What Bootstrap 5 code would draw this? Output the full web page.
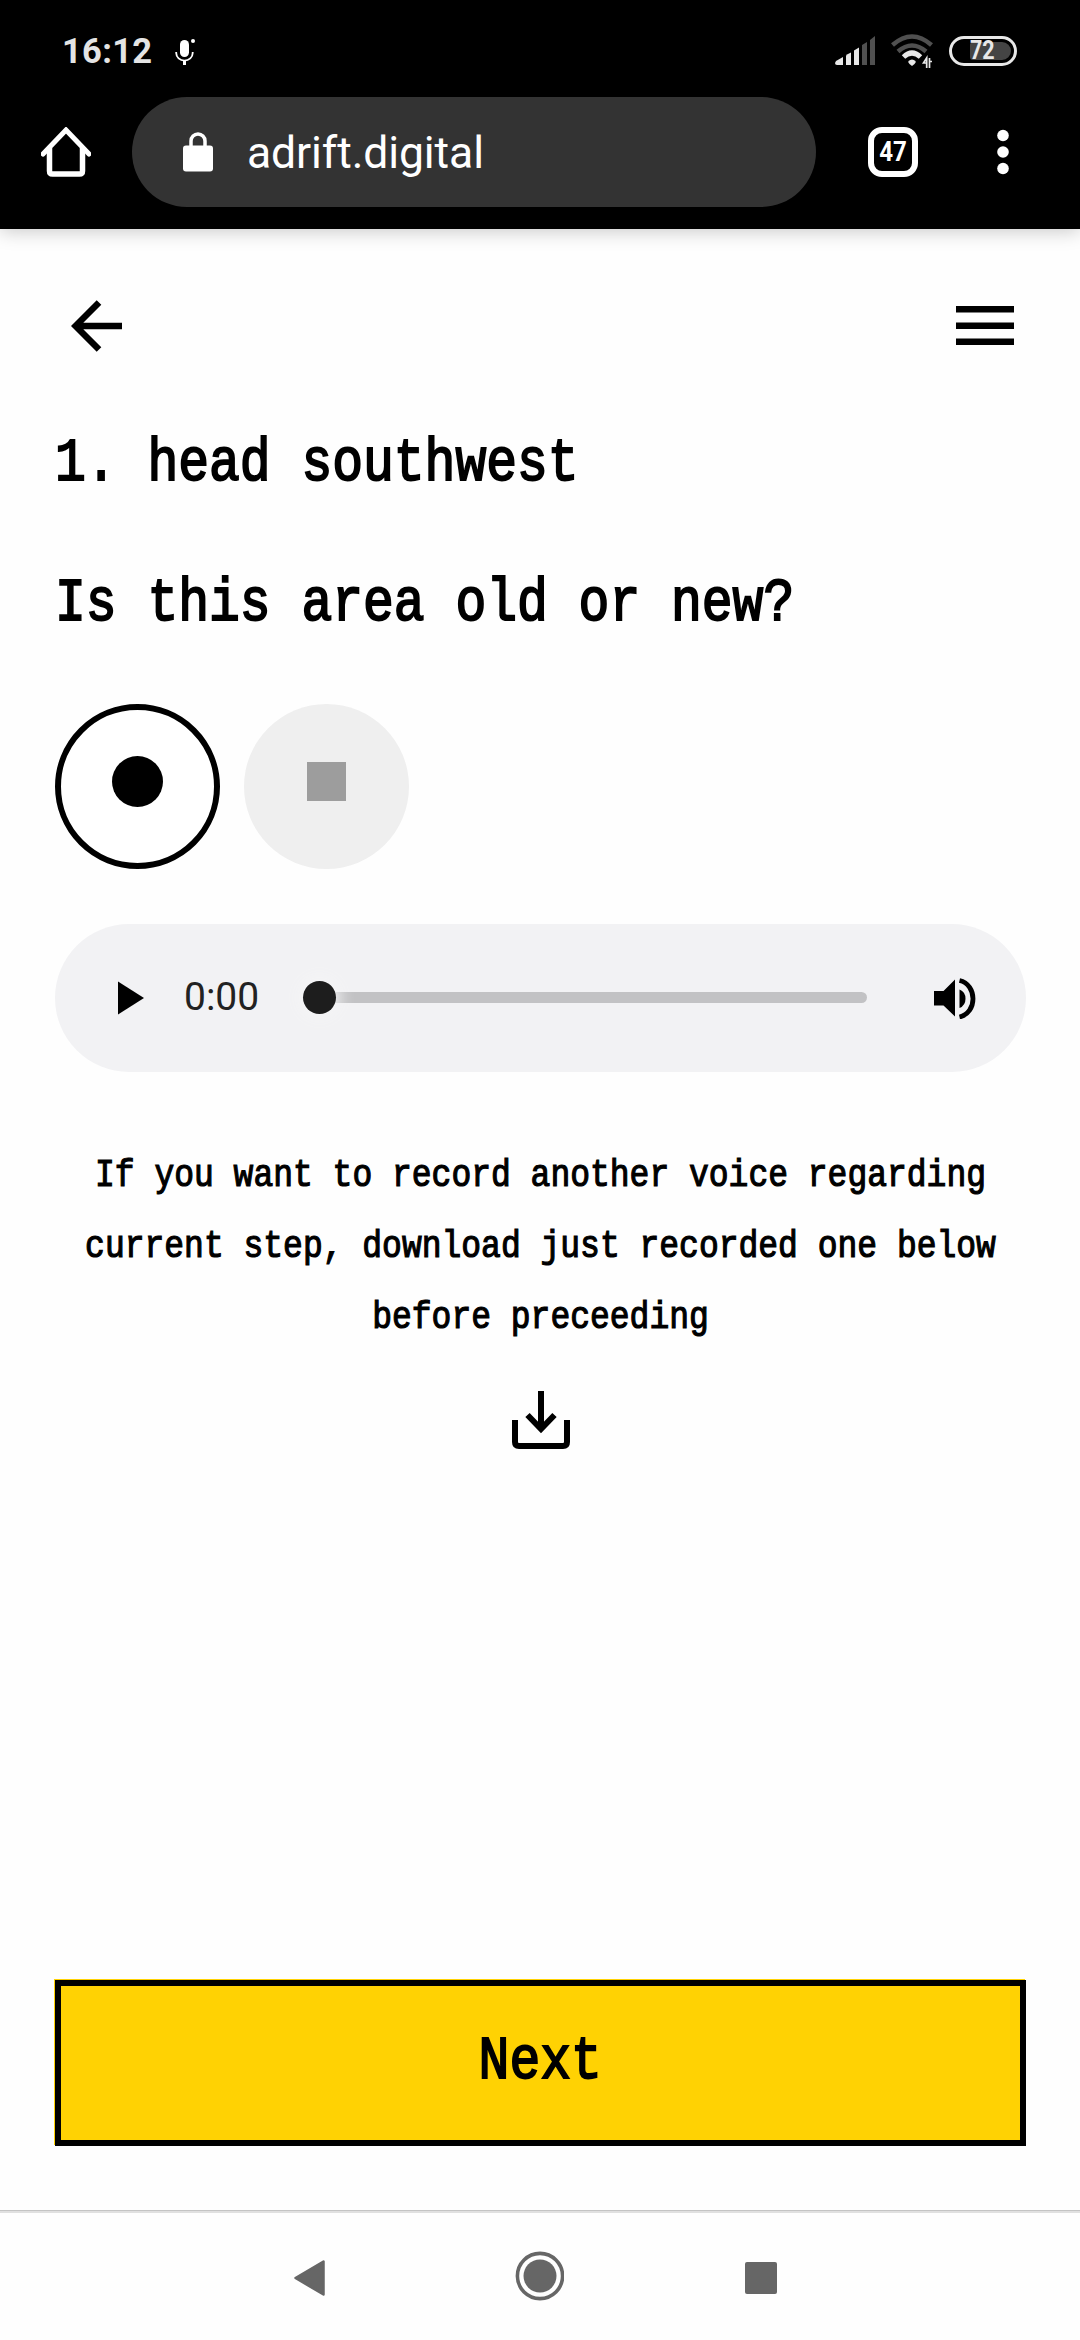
<!DOCTYPE html>
<html lang="en">
<head>
<meta charset="utf-8">
<meta name="viewport" content="width=device-width, initial-scale=1">
<title>adrift.digital</title>
<link href="https://cdn.jsdelivr.net/npm/bootstrap@5.3.0/dist/css/bootstrap.min.css" rel="stylesheet">
<style>
  body { width: 1080px; height: 2340px; overflow: hidden; background: #fefefe; color: #000; font-family: Roboto, sans-serif; }
  svg { display: block; flex: none; }
  .browser-top { height: 229px; background: #000; box-shadow: 0 2px 18px rgba(0,0,0,.22); }
  .status-row { height: 97px; padding: 5px 63px 0 62px; }
  .clock { font-size: 34.5px; font-weight: 700; color: #e4e4e4; line-height: 1; width: 113px; letter-spacing: .3px; }
  .url-row { height: 110px; padding: 0 71px 0 41px; }
  .url-pill { width: 684px; height: 110px; background: #333; margin-left: 41px; padding-left: 51px; border-radius: 55px; color: #fff; font-size: 44.5px; line-height: 1; }
  .url-text { padding: 3px 0 0 34px; letter-spacing: -.1px; }
  .tab-count { width: 50px; height: 50px; border: 6px solid #fff; border-radius: 14px; color: #fff; font-size: 28px; font-weight: 700; line-height: 1; margin-left: 52px; }
  .tab-count span { transform: scaleX(.86); }
  .battery { width: 68px; height: 30px; border: 3px solid #e8e8e8; border-radius: 15px; padding: 3px; color: #e8e8e8; margin-left: 16px; }
  .battery-level { width: 41px; height: 18px; background: #444; border-radius: 3px 9px 9px 3px; font-size: 25px; font-weight: 700; line-height: 18px; }
  .battery-level span { transform: scaleX(.86); transform-origin: left; }
  .page-area { height: 1981px; padding: 0 54px 0 55px; }
  .page-nav { height: 194px; padding: 0 12px 0 16px; }
  .mono { font-family: "Liberation Mono", monospace; font-weight: 400; color: #000; -webkit-text-stroke: 2px #000; white-space: pre; }
  .step-title { font-size: 61px; line-height: 140px; height: 140px; transform: scaleX(.8414); transform-origin: left; margin: 0; }
  .titles { margin-top: -29px; height: 310px; }
  .round-btn { width: 165px; height: 165px; border-radius: 50%; padding: 0 0 10px; }
  .rec-btn { border: 6px solid #000; background: #fff; }
  .stop-btn { background: #efefef; }
  .player { height: 148px; border-radius: 74px; background: #f2f2f4; margin-top: 55px; padding: 0 50px 0 63px; }
  .time { font-size: 39px; color: #222; line-height: 1; margin-left: 40px; width: 119px; margin-top: -2px; }
  .track { width: 564px; height: 11px; border-radius: 6px; background: #c2c2c4; margin-top: -1px; }
  .knob { width: 33px; height: 33px; border-radius: 50%; background: #1d1d1d; box-shadow: 0 0 16px 4px #f5f5f6; }
  .hint { margin-top: 69px; font-size: 38.500px; line-height: 71px; -webkit-text-stroke-width: 1.2px; }
  .hint span { transform: scaleX(.857); margin: 0 -100px; }
  .download-icon { margin-top: 37px; }
  .next-btn { height: 166px; margin-top: auto; margin-bottom: 64px; padding-bottom: 10px; background: #ffd203; border: 6px solid #000; border-radius: 0; box-shadow: -1px -1px 0 #ffd203; }
  .next-btn span { font-size: 61px; line-height: 1; transform: scaleX(.8414); }
  .sys-nav { height: 130px; border-top: 1px solid #c4c4c4; box-shadow: inset 0 2px 0 #e0e0e0; padding: 4px 303px 0 294px; }
</style>
</head>
<body>
<header class="browser-top position-relative">
  <div class="status-row d-flex align-items-center">
    <div class="clock">16:12</div>
    <svg width="22" height="28" viewBox="0 0 22 28"><rect x="5" y="3" width="9" height="17" rx="4.5" fill="#fff"/><path d="M1.2 15v1a8.2 7.5 0 0 0 16.500 0v-1" fill="none" stroke="#fff" stroke-width="1.800"/><path d="M9.500 23v5" stroke="#fff" stroke-width="3"/><circle cx="18" cy="4" r="2" fill="#fff"/></svg>
    <svg class="ms-auto" width="40" height="30" viewBox="0 0 40 30"><g fill="#e8e8e8"><path d="M0 27l1-2 7-4v8H2q-2 0-2-2z"/><path d="M11 19.500l1-1 4-2V29h-5z"/><path d="M19 14.500l5-3V29h-5z"/></g><g fill="#505050"><path d="M27 9l5-3v23h-5zM35 4l5-4v29h-5z"/></g></svg>
    <svg class="ms-3" width="42" height="34" viewBox="0 0 42 34"><g fill="none" stroke-width="4.500"><path d="M1.500 11q19.500-17 39 0" stroke="#505050"/><path d="M7 17.500q14-12 28 0" stroke="#505050"/><path d="M12.500 23q8.500-8 17 0" stroke="#e8e8e8" stroke-width="5"/></g><path d="M17.500 27q3.500-3 7 0 1 1-1 3l-2.500 2-2.500-2q-2-2-1-3z" fill="#e8e8e8"/><path d="M35.700 24v10l0-10-3.200 5H35M38.500 34V24M38.500 27.500h2.500" stroke="#e8e8e8" stroke-width="1.700" fill="none"/></svg>
    <div class="battery d-flex justify-content-end"><div class="battery-level"><span class="d-block">72</span></div></div>
  </div>
  <div class="url-row d-flex align-items-center">
    <svg width="50" height="50" viewBox="0 0 50 50" fill="none" stroke="#fff" stroke-width="5.500"><path d="M2 27L25 3l23 24" stroke-linecap="round" stroke-width="5"/><path d="M8.500 21v23q0 3 3 3h27q3 0 3-3V21"/></svg>
    <div class="url-pill d-flex align-items-center">
      <svg width="30" height="40" viewBox="0 0 30 40"><rect y="13.500" width="30" height="26" rx="3" fill="#fff"/><path d="M8 15V9a7 7 0 0 1 14 0v6" fill="none" stroke="#fff" stroke-width="3.500"/></svg>
      <div class="url-text">adrift.digital</div>
    </div>
    <div class="tab-count d-flex align-items-center justify-content-center"><span>47</span></div>
    <svg class="ms-auto" width="12" height="46" viewBox="0 0 12 46" fill="#fff"><circle cx="6" cy="6.500" r="5.800"/><circle cx="6" cy="23" r="5.800"/><circle cx="6" cy="39.500" r="5.800"/></svg>
  </div>
</header>

<main class="page-area d-flex flex-column">
  <nav class="page-nav d-flex align-items-center justify-content-between">
    <svg width="51" height="52" viewBox="0 0 51 52" fill="none" stroke="#000" stroke-width="6.500"><path d="M51 26H5M28 2.500L4.500 26 28 49.500"/></svg>
    <svg width="58" height="40" viewBox="0 0 58 40"><path d="M0 0h58v6.500H0zM0 16.500h58V23H0zM0 32.500h58V39H0z"/></svg>
  </nav>
  <div class="titles">
    <h1 class="step-title mono">1. head southwest</h1>
    <h2 class="step-title mono">Is this area old or new?</h2>
  </div>
  <div class="d-flex gap-4">
    <button class="btn round-btn rec-btn d-flex align-items-center justify-content-center" aria-label="Record"><svg width="51" height="51" viewBox="0 0 51 51"><circle cx="25.500" cy="25.500" r="25.500"/></svg></button>
    <button class="btn round-btn stop-btn d-flex align-items-center justify-content-center" aria-label="Stop"><svg width="39" height="39"><rect width="39" height="39" fill="#9d9d9d"/></svg></button>
  </div>
  <div class="player d-flex align-items-center">
    <svg width="26" height="34" viewBox="0 0 26 34"><path d="M0 .5l26 16.500L0 33.500z"/></svg>
    <div class="time">0:00</div>
    <div class="track d-flex align-items-center"><div class="knob"></div></div>
    <svg class="ms-auto" width="42" height="42" viewBox="0 0 42 42"><path d="M0 14h9.500L21 2.500v37L9.500 28.500H0z"/><path d="M25.500 12.500v18.500q6-2.500 6-9.300t-6-9.200z"/><path d="M25.500 3.500c18 4 18 32.500 0 36.500" fill="none" stroke="#000" stroke-width="4.800"/></svg>
  </div>
  <div class="hint mono text-center"><span class="d-block">If you want to record another voice regarding</span><span class="d-block">current step, download just recorded one below</span><span class="d-block">before preceeding</span></div>
  <svg class="mx-auto download-icon" width="58" height="58" viewBox="0 0 58 58" fill="none" stroke="#000" stroke-width="6"><path d="M29 0v38M15.500 24L29 38l13.500-14"/><path d="M3 29v22q0 4 4 4h44q4 0 4-4V29"/></svg>
  <button class="btn next-btn w-100 d-flex align-items-center justify-content-center"><span class="mono">Next</span></button>
</main>

<footer class="sys-nav d-flex align-items-center justify-content-between">
  <svg width="31" height="38" viewBox="0 0 31 38"><path d="M29.500 2.500v33L1.500 19z" fill="#666" stroke="#666" stroke-width="2.500" stroke-linejoin="round"/></svg>
  <svg class="ms-2 mb-1" width="50" height="50" viewBox="0 0 50 50"><circle cx="26" cy="25" r="22.600" fill="none" stroke="#666" stroke-width="3.600"/><circle cx="26" cy="25" r="16.500" fill="#666"/></svg>
  <svg width="32" height="32"><rect width="32" height="32" rx="2" fill="#666"/></svg>
</footer>
<script src="https://cdn.jsdelivr.net/npm/bootstrap@5.3.0/dist/js/bootstrap.bundle.min.js"></script>
</body>
</html>
